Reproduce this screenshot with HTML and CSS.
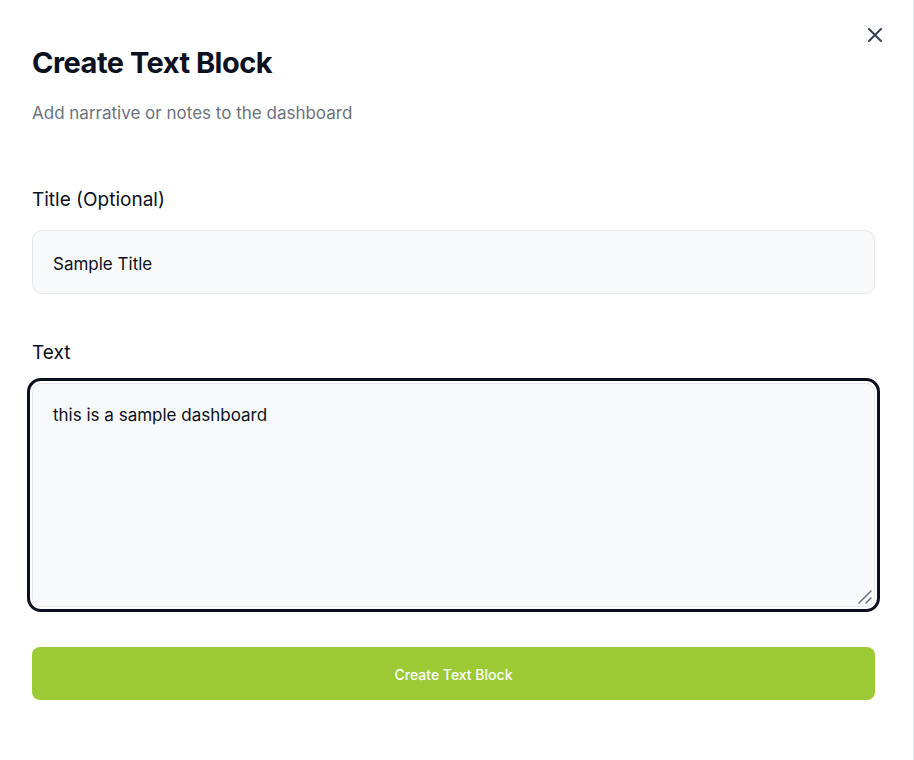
FILE: index.html
```html
<!DOCTYPE html>
<html lang="en">
<head>
<meta charset="utf-8">
<title>Create Text Block</title>
<link rel="stylesheet" href="styles.css">
</head>
<body>
<div class="modal">
  <button class="close" aria-label="Close">
    <svg width="16" height="16" viewBox="0 0 16 16" fill="none" stroke="#374151" stroke-width="2" stroke-linecap="round"><path d="M2 2L14 14M14 2L2 14"/></svg>
  </button>
  <header class="head">
    <h1 class="title">Create Text Block</h1>
    <p class="subtitle">Add narrative or notes to the dashboard</p>
  </header>
  <form class="form">
    <label class="field">
      <span class="label">Title (Optional)</span>
      <input class="input" type="text" value="Sample Title">
    </label>
    <label class="field">
      <span class="label">Text</span>
      <span class="area-wrap">
        <textarea class="textarea">this is a sample dashboard</textarea>
        <svg class="grip" width="16" height="16" viewBox="0 0 16 16" fill="none" stroke="#6b7280" stroke-width="1.5" stroke-linecap="round"><path d="M2 14L14 2M9 14L14 9"/></svg>
      </span>
    </label>
    <button type="button" class="submit">Create Text Block</button>
  </form>
</div>
</body>
</html>
```
FILE: styles.css
```css
* { box-sizing: border-box; }
html, body { margin: 0; padding: 0; background: #fff; }
body {
  font-family: Inter, "Noto Sans", "Liberation Sans", sans-serif;
  color: #0b1020;
}
.modal {
  position: relative;
  width: 914px;
  height: 760px;
  padding: 44px 38px 0 32px;
  border-right: 1px solid #e5e7eb;
}
.close {
  position: absolute;
  top: 27px;
  right: 30px;
  width: 16px;
  height: 16px;
  padding: 0;
  border: 0;
  background: none;
  display: flex;
}
.head { display: flex; flex-direction: column; gap: 19px; }
.title {
  margin: 0;
  font-size: 29px;
  line-height: 38px;
  font-weight: 700;
  letter-spacing: -0.5px;
  color: #0b1020;
}
.subtitle {
  margin: 0;
  font-size: 17px;
  line-height: 24px;
  color: #6b7280;
}
.form { display: flex; flex-direction: column; margin-top: 62px; }
.field { display: flex; flex-direction: column; gap: 17px; margin-bottom: 46px; }
.field + .field { margin-bottom: 40px; }
.label { font-size: 19px; line-height: 26px; font-weight: 400; color: #0b1020; }
.input, .textarea {
  width: 100%;
  font: inherit;
  font-size: 17px;
  color: #0b1020;
  background: #f8f9fb;
  border: 1px solid #e5e7eb;
  border-radius: 10px;
  padding: 0 20px;
}
.input { height: 64px; padding-top: 3px; }
.area-wrap { position: relative; display: flex; }
.textarea {
  display: block;
  height: 224px;
  padding: 20px 20px;
  resize: none;
  line-height: 22px;
  outline: 3px solid #0b1020;
  outline-offset: 2px;
  border-radius: 9px;
}
.grip {
  position: absolute;
  right: 2px;
  bottom: 2px;
  pointer-events: none;
}
.submit {
  height: 53px;
  border: 0;
  border-radius: 8px;
  background: #9bca34;
  color: #fff;
  font: inherit;
  font-size: 14px;
  font-weight: 500;
  padding-top: 2px;
}
```
